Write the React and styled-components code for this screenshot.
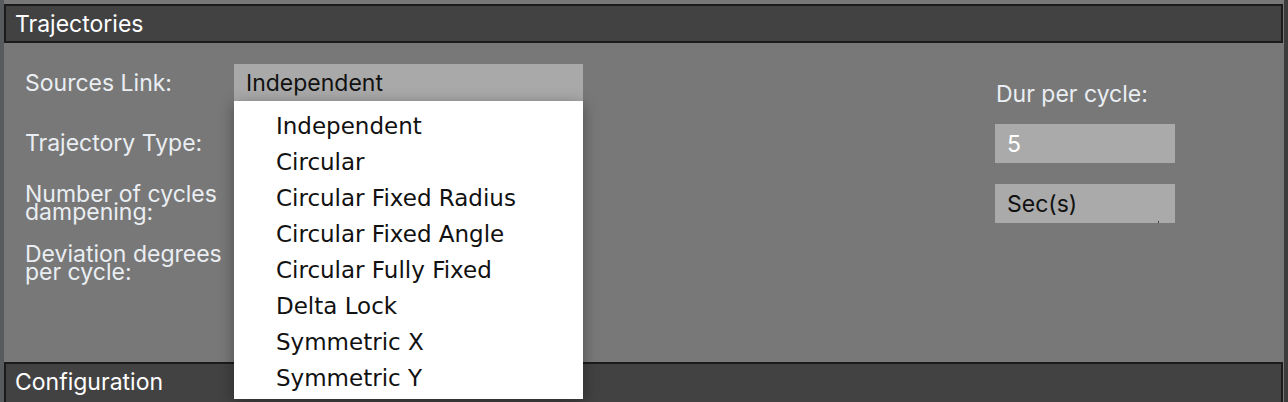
import React from "react";
import styled, {createGlobalStyle} from "styled-components";

const GlobalStyle = createGlobalStyle`
  html, body {
    margin: 0;
    padding: 0;
    background: #787878;
    overflow: hidden;
  }
`;

const Frame = styled.div`
  width: 1288px;
  height: 402px;
  box-sizing: border-box;
  display: flex;
  flex-direction: column;
  padding-top: 4px;
  background: #787878;
  border-left: 4px solid #595a5e;
  border-right: 4px solid #3c3c3c;
  font-family: Inter, "Open Sans", sans-serif;
  overflow: hidden;
`;

const SectionBar = styled.div`
  flex-shrink: 0;
  height: ${({tall}) => (tall ? "44px" : "39px")};
  box-sizing: border-box;
  margin-right: 1px;
  display: flex;
  align-items: ${({tall}) => (tall ? "flex-start" : "center")};
  padding: ${({tall}) => (tall ? "3px 0 0 9px" : "0 0 0 9px")};
  background: #424242;
  border: 2px solid #1b1b1b;
  color: #ffffff;
  font-size: 23px;
  line-height: 30px;
`;

const Body = styled.div`
  flex-shrink: 0;
  height: 319px;
  box-sizing: border-box;
  display: flex;
  padding: 21px 0 0 21px;
`;

const Form = styled.div`
  display: grid;
  grid-template-columns: 209px 349px;
  grid-auto-rows: 37px;
  row-gap: 23px;
  align-items: center;
  align-content: start;
`;

const Label = styled.div`
  color: #eaeef2;
  font-size: 23px;
  line-height: 18px;
`;

const Select = styled.div`
  position: relative;
  height: 37px;
  display: flex;
  align-items: center;
  padding-left: 12px;
  background: #a9a9a9;
  color: #111;
  font-size: 23px;
`;

const Menu = styled.ul`
  position: absolute;
  top: 100%;
  left: 0;
  width: 100%;
  margin: 0;
  padding: 7px 0 3px;
  list-style: none;
  background: #ffffff;
  box-shadow: 0 3px 14px rgba(0, 0, 0, 0.35);
  z-index: 10;
`;

const MenuItem = styled.li`
  height: 36px;
  display: flex;
  align-items: center;
  padding-left: 42px;
  font-family: "DejaVu Sans", "Noto Sans", sans-serif;
  font-size: 23px;
  color: #111;
`;

const Side = styled.div`
  margin-left: auto;
  margin-right: 109px;
  width: 180px;
  display: flex;
  flex-direction: column;
  padding-top: 15px;
`;

const SideLabel = styled.div`
  color: #eaeef2;
  font-size: 23px;
  line-height: 30px;
  padding-left: 1px;
  margin-bottom: 15px;
`;

const Field = styled.div`
  position: relative;
  height: 39px;
  display: flex;
  align-items: center;
  padding-left: 12px;
  margin-bottom: 21px;
  background: #aaaaaa;
  color: ${({light}) => (light ? "#ffffff" : "#111")};
  font-size: 23px;

  &::after {
    content: "";
    display: ${({marker}) => (marker ? "block" : "none")};
    position: absolute;
    right: 16px;
    bottom: 0;
    width: 1px;
    height: 2px;
    background: #444;
  }
`;

const options = [
  "Independent",
  "Circular",
  "Circular Fixed Radius",
  "Circular Fixed Angle",
  "Circular Fully Fixed",
  "Delta Lock",
  "Symmetric X",
  "Symmetric Y",
];

export default function App() {
  return (
    <>
      <GlobalStyle/>
      <Frame>
        <SectionBar>Trajectories</SectionBar>
        <Body>
          <Form>
            <Label>Sources Link:</Label>
            <Select>
              Independent
              <Menu>
                {options.map((o) => (
                  <MenuItem key={o}>{o}</MenuItem>
                ))}
              </Menu>
            </Select>
            <Label>Trajectory Type:</Label>
            <div/>
            <Label>Number of cycles dampening:</Label>
            <div/>
            <Label>Deviation degrees per cycle:</Label>
            <div/>
          </Form>
          <Side>
            <SideLabel>Dur per cycle:</SideLabel>
            <Field light>5</Field>
            <Field marker>Sec(s)</Field>
          </Side>
        </Body>
        <SectionBar tall>Configuration</SectionBar>
      </Frame>
    </>
  );
}
